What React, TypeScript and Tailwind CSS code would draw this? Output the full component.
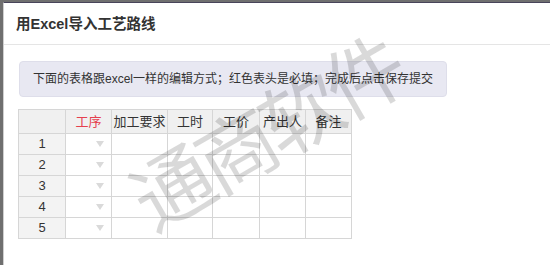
const COLUMNS = [
    { label: "工序", required: true },
    { label: "加工要求" },
    { label: "工时" },
    { label: "工价" },
    { label: "产出人" },
    { label: "备注" },
];

const ROWS = [1, 2, 3, 4, 5];

// ─── Dropdown caret for select cells ──────────────────────────────────────────

const Caret = () => (
    <svg width="8" height="6" viewBox="0 0 8 6" className="shrink-0">
        <path d="M0 0 L8 0 L4 6 Z" fill="#dadada" />
    </svg>
);

// ─── Component ────────────────────────────────────────────────────────────────

const App = () => {
    return (
        <div
            className="relative w-[550px] h-[265px] overflow-hidden bg-[#6f6f6f] pt-[2px] pl-[3px]"
            style={{ fontFamily: '"Liberation Sans", "Noto Sans CJK SC", sans-serif' }}
        >
            <div className="h-full bg-white border-t border-[#48445a] border-l border-l-[#cfcfcf]">
                <div className="h-[42px] flex items-center pl-[12px] pt-[3px] border-b border-[#e5e5e5]">
                    <span className="text-[14.5px] font-bold text-[#333]">用Excel导入工艺路线</span>
                </div>

                <div className="pt-[16px] pl-[15px]">
                    <div className="w-[428px] h-[36px] flex items-center justify-center rounded-[4px] bg-[#e8e8f2] border border-[#dedeea] text-[12px] text-[#333]">
                        下面的表格跟excel一样的编辑方式；红色表头是必填；完成后点击保存提交
                    </div>

                    <div className="mt-[12px] -ml-[1px] inline-grid grid-cols-[46px_45px_55px_44px_46px_45px_45px] auto-rows-[20px] grid-rows-[23px] gap-px p-px bg-[#d6d6d6] text-[13px] text-[#333]">
                        <div className="bg-[#f0f0f0]" />
                        {COLUMNS.map((col) => (
                            <div
                                key={col.label}
                                className={`bg-[#f0f0f0] flex items-center justify-center ${col.required ? "text-[#e5404e]" : ""}`}
                            >
                                {col.label}
                            </div>
                        ))}
                        {ROWS.map((row) => (
                            <>
                                <div key={`n${row}`} className="bg-[#f3f3f3] flex items-center justify-center">
                                    {row}
                                </div>
                                <div key={`s${row}`} className="bg-white flex items-center justify-end pr-[7px]">
                                    <Caret />
                                </div>
                                {COLUMNS.slice(1).map((col) => (
                                    <div key={`${col.label}${row}`} className="bg-white" />
                                ))}
                            </>
                        ))}
                    </div>
                </div>
            </div>

            <div
                className="absolute left-[116px] top-[89px] w-[296px] h-[80px] -rotate-30 pointer-events-none whitespace-nowrap text-center text-[80px] leading-[80px] tracking-[-6px] text-black/15"
                style={{ fontFamily: '"Noto Sans CJK SC", sans-serif' }}
            >
                通商软件
            </div>
        </div>
    );
};

export default App;
